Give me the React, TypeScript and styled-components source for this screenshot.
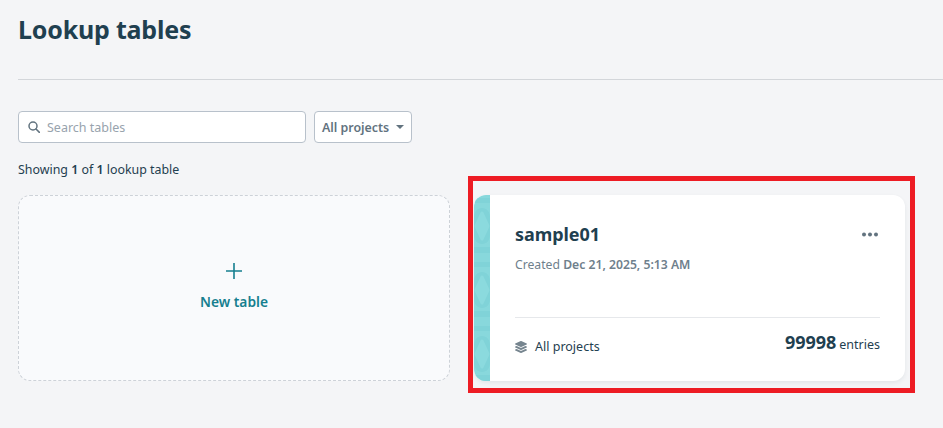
import React from "react";
import styled, { createGlobalStyle } from "styled-components";
import { FaLayerGroup } from "react-icons/fa";

const GlobalStyle = createGlobalStyle`
  html, body {
    margin: 0;
    padding: 0;
    height: 428px;
    overflow: hidden;
    background: #f4f5f7;
    font-family: "Noto Sans", "Open Sans", sans-serif;
    color: #1c3d4d;
  }
  * { box-sizing: border-box; }
`;

const Page = styled.div`
  position: relative;
  width: 943px;
  height: 428px;
  overflow: hidden;
`;

const Header = styled.header`
  margin-left: 18px;
  height: 80px;
  padding-top: 12px;
  border-bottom: 1px solid #d3d6da;
`;

const Title = styled.h1`
  margin: 0;
  font-size: 25px;
  line-height: 34px;
  font-weight: 700;
  color: #1f4050;
  letter-spacing: -0.2px;
`;

const Content = styled.main`
  padding: 31px 38px 0 18px;
`;

const Filters = styled.div`
  display: flex;
  gap: 8px;
`;

const SearchBox = styled.div`
  width: 288px;
  height: 32px;
  display: flex;
  align-items: center;
  gap: 7px;
  padding-left: 9px;
  background: #fff;
  border: 1px solid #b8c1cb;
  border-radius: 4px;
  font-size: 12.5px;
  color: #98a3ad;
`;

const SelectButton = styled.div`
  width: 98px;
  height: 32px;
  display: flex;
  align-items: center;
  justify-content: space-between;
  padding: 0 7px;
  background: #fff;
  border: 1px solid #b8c1cb;
  border-radius: 4px;
  font-size: 12.4px;
  font-weight: 600;
  color: #62737f;
  white-space: nowrap;
`;

const Caret = styled.span`
  width: 0;
  height: 0;
  border-left: 4.5px solid transparent;
  border-right: 4.5px solid transparent;
  border-top: 4.5px solid #62737f;
`;

const Summary = styled.p`
  margin: 18px 0 0;
  font-size: 12.4px;
  line-height: 18px;
  color: #1f4050;
  strong { font-weight: 600; }
`;

const Grid = styled.div`
  display: grid;
  grid-template-columns: 432px 431px;
  gap: 24px;
  margin-top: 16px;
`;

const NewCard = styled.div`
  height: 186px;
  display: flex;
  flex-direction: column;
  align-items: center;
  padding-top: 67px;
  background: #f9fafc;
  border: 1px dashed #cdd2d8;
  border-radius: 12px;
`;

const NewLabel = styled.span`
  margin-top: 14px;
  font-size: 13.8px;
  line-height: 18px;
  font-weight: 600;
  color: #167f8f;
`;

const TableCard = styled.article`
  height: 186px;
  display: flex;
  background: #fff;
  border-radius: 12px;
  overflow: hidden;
  box-shadow: 0 2px 4px rgba(40, 60, 75, 0.08);
`;

const Stripe = styled.div`
  flex: 0 0 16px;
  background: #88d8dc;
  line-height: 0;
`;

const CardBody = styled.div`
  flex: 1;
  display: flex;
  flex-direction: column;
  padding: 26px 25px 0 25px;
`;

const CardTop = styled.div`
  display: flex;
  justify-content: space-between;
  align-items: center;
  padding-right: 2px;
`;

const CardName = styled.h2`
  margin: 0;
  font-size: 18px;
  line-height: 26px;
  font-weight: 700;
  color: #1f4050;
  letter-spacing: -0.05px;
`;

const Created = styled.div`
  margin-top: 9px;
  margin-bottom: -1px;
  font-size: 12.2px;
  line-height: 18px;
  color: #6f808c;
  strong { font-weight: 600; }
`;

const CardFooter = styled.div`
  margin-top: 44px;
  height: 58px;
  display: flex;
  justify-content: space-between;
  align-items: center;
  border-top: 1px solid #e6e8eb;
`;

const ProjectTag = styled.span`
  display: flex;
  align-items: center;
  gap: 8px;
  font-size: 12.5px;
  color: #1f4050;
  svg { color: #76858f; }
`;

const Entries = styled.span`
  padding-bottom: 10px;
  font-size: 12.5px;
  color: #1f4050;
  strong {
    font-size: 18px;
    font-weight: 700;
    letter-spacing: -0.05px;
    margin-right: 3px;
  }
`;

const Highlight = styled.div`
  position: absolute;
  left: 468px;
  top: 176px;
  width: 447px;
  height: 217px;
  border: 5px solid #ed1c24;
  pointer-events: none;
`;

const SearchIcon = () => (
  <svg width="12" height="12" viewBox="0 0 12 12" fill="none" stroke="#62737f" strokeWidth="1.5">
    <circle cx="5" cy="5" r="4" />
    <path d="M8 8l3.4 3.4" strokeLinecap="round" />
  </svg>
);

const PlusIcon = () => (
  <svg width="16" height="16" viewBox="0 0 16 16" stroke="#167f8f" strokeWidth="1.6">
    <path d="M8 0v16M0 8h16" />
  </svg>
);

const MoreIcon = () => (
  <svg width="16" height="5" viewBox="0 0 16 5" fill="#62737f">
    <circle cx="2" cy="2.5" r="2" />
    <circle cx="8" cy="2.5" r="2" />
    <circle cx="14" cy="2.5" r="2" />
  </svg>
);

const StripePattern = () => (
  <svg width="16" height="186" viewBox="0 0 16 186">
    <defs>
      <pattern id="tile" width="16" height="64" patternUnits="userSpaceOnUse" y="-5">
        <path d="M8 18c5 0 8 4 8 9v18c0 5-3 9-8 9s-8-4-8-9V27c0-5 3-9 8-9z" fill="#80d3d8" />
        <path d="M8 23l6 13-6 13-6-13z" fill="#8bdade" strokeLinejoin="round" stroke="#8bdade" strokeWidth="3" />
        <rect y="57" width="16" height="6" fill="#80d3d8" />
        <rect y="8" width="16" height="5" fill="#80d3d8" />
      </pattern>
    </defs>
    <rect width="16" height="186" fill="url(#tile)" />
  </svg>
);

export default function App() {
  return (
    <Page>
      <GlobalStyle />
      <Header>
        <Title>Lookup tables</Title>
      </Header>
      <Content>
        <Filters>
          <SearchBox>
            <SearchIcon />
            Search tables
          </SearchBox>
          <SelectButton>
            All projects
            <Caret />
          </SelectButton>
        </Filters>
        <Summary>
          Showing <strong>1</strong> of <strong>1</strong> lookup table
        </Summary>
        <Grid>
          <NewCard>
            <PlusIcon />
            <NewLabel>New table</NewLabel>
          </NewCard>
          <TableCard>
            <Stripe>
              <StripePattern />
            </Stripe>
            <CardBody>
              <CardTop>
                <CardName>sample01</CardName>
                <MoreIcon />
              </CardTop>
              <Created>
                Created <strong>Dec 21, 2025, 5:13 AM</strong>
              </Created>
              <CardFooter>
                <ProjectTag>
                  <FaLayerGroup size={12} />
                  All projects
                </ProjectTag>
                <Entries>
                  <strong>99998</strong>entries
                </Entries>
              </CardFooter>
            </CardBody>
          </TableCard>
        </Grid>
      </Content>
      <Highlight />
    </Page>
  );
}
